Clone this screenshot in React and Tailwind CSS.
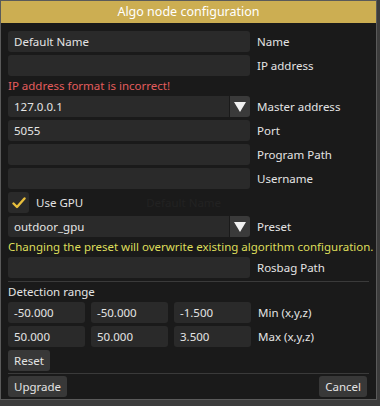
const font = { fontFamily: '"Noto Sans", "DejaVu Sans", sans-serif' };

function Field({ value = '', w = 'w-[242px]' }) {
  return (
    <div className={`${w} h-[21px] shrink-0 rounded-[3px] bg-[#2a2a2a] px-[6px] flex items-center text-[#e4e4e4]`}>
      {value}
    </div>
  );
}

function Row({ label, children }) {
  return (
    <div className="flex items-center h-[21px] shrink-0 gap-[7px]">
      {children}
      <span className="text-[#e4e4e4] whitespace-nowrap">{label}</span>
    </div>
  );
}

function Combo({ value }) {
  return (
    <div className="flex w-[242px] h-[21px] shrink-0 gap-[1px]">
      <div className="flex-1 rounded-l-[3px] bg-[#2a2a2a] px-[6px] flex items-center text-[#e4e4e4]">{value}</div>
      <div className="w-[20px] rounded-r-[3px] bg-[#3a3a3a] flex items-center justify-center">
        <svg width="12" height="10" viewBox="0 0 12 10">
          <path d="M0 0 L12 0 L6 10 Z" fill="#f2f2f2" />
        </svg>
      </div>
    </div>
  );
}

function Button({ children }) {
  return (
    <div className="h-[21px] rounded-[3px] bg-[#383838] px-[6px] flex items-center text-[#e4e4e4]">{children}</div>
  );
}

export default function App() {
  return (
    <div className="w-[380px] h-[406px] bg-[#3c3c3c] text-[11.5px] leading-none" style={font}>
      <div className="w-[377px] h-[400px] border border-[#5a5a5a] bg-[#1a1a1a] flex flex-col overflow-hidden">
        <div className="h-[22px] shrink-0 bg-[#ccae52] flex items-center justify-center text-[#ffffff] text-[12.5px]">
          Algo node configuration
        </div>
        <div className="flex flex-col px-[7px] pt-[8px] gap-[3px]">
          <Row label="Name"><Field value="Default Name" /></Row>
          <Row label="IP address"><Field /></Row>
          <div className="h-[14px] flex items-center text-[#e35d5d]">IP address format is incorrect!</div>
          <Row label="Master address"><Combo value="127.0.0.1" /></Row>
          <Row label="Port"><Field value="5055" /></Row>
          <Row label="Program Path"><Field /></Row>
          <Row label="Username"><Field /></Row>
          <div className="flex items-center h-[21px] gap-[7px]">
            <div className="w-[21px] h-[21px] rounded-[3px] bg-[#2a2a2a] flex items-center justify-center">
              <svg width="14" height="12" viewBox="0 0 14 12">
                <path d="M1.5 6.5 L5 10 L12.5 1.5" stroke="#e8bf3c" strokeWidth="2.4" fill="none" strokeLinecap="round" strokeLinejoin="round" />
              </svg>
            </div>
            <span className="text-[#e4e4e4]">Use GPU</span>
            <span className="ml-[56px] text-[#222222]">Default Name</span>
          </div>
          <Row label="Preset"><Combo value="outdoor_gpu" /></Row>
          <div className="h-[14px] flex items-center text-[#dede5a] whitespace-nowrap">
            Changing the preset will overwrite existing algorithm configuration.
          </div>
          <Row label="Rosbag Path"><Field /></Row>
        </div>
        <div className="mx-[7px] mt-[3px] h-px shrink-0 bg-[#3a3a3a]" />
        <div className="flex flex-col px-[7px] pt-[3px] gap-[3px]">
          <div className="h-[14px] flex items-center text-[#e4e4e4]">Detection range</div>
          <Row label="Min (x,y,z)">
            <div className="flex gap-[6px]">
              <Field value="-50.000" w="w-[77px]" />
              <Field value="-50.000" w="w-[77px]" />
              <Field value="-1.500" w="w-[77px]" />
            </div>
          </Row>
          <Row label="Max (x,y,z)">
            <div className="flex gap-[6px]">
              <Field value="50.000" w="w-[77px]" />
              <Field value="50.000" w="w-[77px]" />
              <Field value="3.500" w="w-[77px]" />
            </div>
          </Row>
          <div className="flex"><Button>Reset</Button></div>
        </div>
        <div className="mx-[7px] mt-[2px] h-px shrink-0 bg-[#3a3a3a]" />
        <div className="flex justify-between pl-[7px] pr-[9px] pt-[2px]">
          <Button>Upgrade</Button>
          <Button>Cancel</Button>
        </div>
      </div>
    </div>
  );
}
